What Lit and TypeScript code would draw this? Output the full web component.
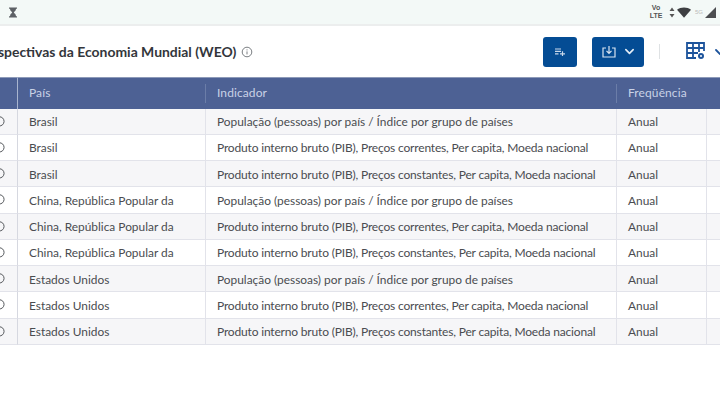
import { LitElement, html, css, svg } from "lit";
import { customElement } from "lit/decorators.js";

const POP = "População (pessoas) por país / Índice por grupo de países";
const COR = "Produto interno bruto (PIB), Preços correntes, Per capita, Moeda nacional";
const CON = "Produto interno bruto (PIB), Preços constantes, Per capita, Moeda nacional";
const COUNTRIES = ["Brasil", "China, República Popular da", "Estados Unidos"];
const ROWS = COUNTRIES.flatMap((c) => [POP, COR, CON].map((i) => ({ c, i })));

@customElement("app-root")
export class AppRoot extends LitElement {
  static styles = css`
    :host {
      display: block;
      width: 720px;
      height: 405px;
      overflow: hidden;
      background: #fff;
      font-family: Lato, "Open Sans", sans-serif;
      color: #3f4247;
    }
    .status {
      height: 24px;
      background: #f3f9f7;
      border-bottom: 2px solid #eceeee;
      display: flex;
      align-items: center;
      justify-content: space-between;
      padding: 0 3px 0 8px;
    }
    .status-right { display: flex; align-items: center; }
    .volte {
      font: 700 7px/8px "Liberation Sans", sans-serif;
      color: #555;
      text-align: center;
      width: 14px;
      margin-right: 6px;
    }
    .arrows { margin-right: 2px; }
    .five { font: 6px "Liberation Sans", sans-serif; color: #bbb; margin: 0 2px 0 4px; width: 7px; }
    .toolbar {
      height: 51px;
      display: flex;
      align-items: center;
      justify-content: space-between;
    }
    .title-wrap { display: flex; align-items: center; gap: 5px; margin-left: -23px; }
    h1 {
      margin: 0;
      font-size: 13.95px;
      font-weight: 700;
      color: #33363b;
      white-space: nowrap;
    }
    .actions { display: flex; align-items: center; }
    .btn {
      height: 30px;
      background: #044c94;
      border-radius: 3px;
      display: flex;
      align-items: center;
      justify-content: center;
      gap: 8px;
    }
    .btn.add { width: 34px; margin-right: 15px; }
    .btn.down { width: 52px; margin-right: 15px; }
    .sep { width: 1px; height: 15px; background: #dfe2e4; margin-right: 26px; }
    .grid-tool { display: flex; align-items: center; gap: 8px; margin-right: -6px; }
    .table { display: grid; grid-template-columns: 18px 188px 411px 90px 13px; }
    .row { display: contents; }
    .head {
      height: 31.5px;
      box-sizing: border-box;
      background: #4d6194;
      border-top: 1px solid #8d9ab8;
      color: #c9d2e6;
      font-size: 12px;
      display: flex;
      align-items: center;
      padding: 0 0 1px 11px;
      letter-spacing: 0.1px;
      position: relative;
    }
    .head.first { padding: 0; border-right: 1px solid #a9b5cf; }
    .head.divided::after {
      content: "";
      position: absolute;
      left: -1px;
      top: 6px;
      bottom: 6px;
      width: 1px;
      background: #6b7da8;
    }
    .cell {
      height: 26.25px;
      box-sizing: border-box;
      border-bottom: 1px solid #e2e3ea;
      border-right: 1px solid #e2e3ea;
      display: flex;
      align-items: center;
      padding: 1px 0 0 11px;
      font-size: 11.9px;
      color: #4a4c50;
      white-space: nowrap;
      background: #fff;
    }
    .odd .cell { background: #f6f6f8; }
    .cell.ind.pib { font-size: 12px; letter-spacing: -0.175px; }
    .cell.sel {
      padding: 0 12px 0 0;
      justify-content: flex-end;
      overflow: hidden;
      border-right-color: #d6d8e0;
    }
    .cell.sel svg { flex: none; }
    .cell.tail { border-right: none; padding: 0; }
  `;

  private chevron(color: string, size: number) {
    return html`<svg width=${size} height=${size} viewBox="0 0 12 12" fill="none" stroke=${color} stroke-width="1.8" stroke-linecap="round" stroke-linejoin="round"><path d="M2 4l4 4 4-4" /></svg>`;
  }

  render() {
    return html`
      <div class="status">
        <svg width="10" height="11" viewBox="0 0 10 11" fill="#5d6166">
          <path d="M1 0.5h8v1.3H8C8 4 6.3 4.6 5.8 5.5 6.3 6.4 8 7 8 9.2h1v1.3H1V9.2h1C2 7 3.7 6.4 4.2 5.5 3.7 4.6 2 4 2 1.8H1z" />
        </svg>
        <div class="status-right">
          <div class="volte">Vo<br />LTE</div>
          <svg class="arrows" width="6" height="11" viewBox="0 0 6 11" fill="#555"><path d="M3 0.5l2.5 3.6h-5zM3 10.5L0.5 6.9h5z" /></svg>
          <svg width="14" height="11" viewBox="0 0 15 11" fill="#3d3f42"><path d="M0 2.5C4 -0.5 11 -0.5 15 2.5L7.5 11z" /></svg>
          <span class="five">5G</span>
          <svg width="13" height="13" viewBox="0 0 13 13" fill="#4b4d50"><path d="M12 1v11H1z" /></svg>
        </div>
      </div>
      <div class="toolbar">
        <div class="title-wrap">
          <h1>Perspectivas da Economia Mundial (WEO)</h1>
          <svg width="12" height="12" viewBox="0 0 12 12" fill="none" stroke="#6b6f74" stroke-width="0.9">
            <circle cx="6" cy="6" r="4.8" />
            <path d="M6 5.4v3M6 3.4v1" />
          </svg>
        </div>
        <div class="actions">
          <div class="btn add">
            <svg width="10" height="8" viewBox="0 0 10 8" fill="none" stroke="#c9d8ea" stroke-width="1.2">
              <path d="M0 1h6M0 3.4h6M0 5.8h3.5M5 5.8h5M7.5 3.3v5" />
            </svg>
          </div>
          <div class="btn down">
            <svg width="14" height="12" viewBox="0 0 14 12" fill="none" stroke="#d9e5f2" stroke-width="1.2">
              <path d="M4 2H1v9h12V2h-3M7 0v7M4.5 4.8L7 7.4l2.5-2.6" />
            </svg>
            ${this.chevron("#e4edf6", 11)}
          </div>
          <div class="sep"></div>
          <div class="grid-tool">
            <svg width="20" height="19" viewBox="0 0 20 19" fill="none" stroke="#1d549c" stroke-width="1.8">
              <path d="M10 16H1V1h17v8M1 6h17M1 11h11M7 1v15M13 1v9" />
              <circle cx="15" cy="14" r="3" fill="#1d549c" stroke="none" />
              <circle cx="15" cy="14" r="1" fill="#fff" stroke="none" />
            </svg>
            ${this.chevron("#1d549c", 12)}
          </div>
        </div>
      </div>
      <div class="table">
        <div class="head first"></div>
        <div class="head">País</div>
        <div class="head divided">Indicador</div>
        <div class="head divided">Freqüência</div>
        <div class="head"></div>
        ${ROWS.map(
          (r, idx) => html`
            <div class="row ${idx % 2 === 0 ? "odd" : ""}">
              <div class="cell sel">
                ${svg`<svg width="11" height="11" viewBox="0 0 11 11" fill="none" stroke="#55585c" stroke-width="1"><path d="M3.5 1.2A4.6 4.6 0 1 1 1 6.5" /></svg>`}
              </div>
              <div class="cell">${r.c}</div>
              <div class="cell ind ${r.i === POP ? "" : "pib"}">${r.i}</div>
              <div class="cell">Anual</div>
              <div class="cell tail"></div>
            </div>
          `
        )}
      </div>
    `;
  }
}
